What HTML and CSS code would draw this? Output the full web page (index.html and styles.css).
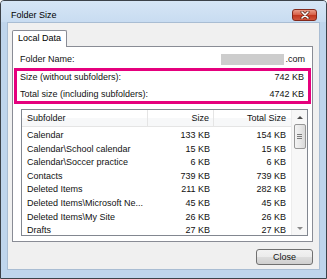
FILE: index.html
```html
<!doctype html>
<html lang="en">
<head>
  <meta charset="UTF-8">
  <meta name="viewport" content="width=device-width, initial-scale=1.0">
  <title>Folder Size</title>
  <link rel="stylesheet" href="styles.css">
</head>
<body>
  <div class="window">
    <div class="titlebar">
      <span class="title">Folder Size</span>
      <button class="close-x" aria-label="Close">
        <svg width="10" height="8" viewBox="0 0 10 8">
          <path d="M2 1 L8 7 M8 1 L2 7" stroke="#5a2418" stroke-width="3" stroke-linecap="round"/>
          <path d="M2 1 L8 7 M8 1 L2 7" stroke="#fff" stroke-width="1.6" stroke-linecap="round"/>
        </svg>
      </button>
    </div>
    <div class="client">
      <div class="tabs">
        <span class="tab">Local Data</span>
      </div>
      <div class="panel">
        <div class="info-row">
          <span>Folder Name:</span>
          <span class="mail"><span class="blur"></span>.com</span>
        </div>
        <div class="highlight">
          <div class="info-row">
            <span>Size (without subfolders):</span>
            <span>742 KB</span>
          </div>
          <div class="info-row">
            <span>Total size (including subfolders):</span>
            <span>4742 KB</span>
          </div>
        </div>
        <div class="listview">
          <div class="list-main">
            <div class="list-head">
              <span class="col name">Subfolder</span>
              <span class="col size">Size</span>
              <span class="col total">Total Size</span>
            </div>
            <div class="list-body">
              <div class="list-row"><span class="col name">Calendar</span><span class="col size">133 KB</span><span class="col total">154 KB</span></div>
              <div class="list-row"><span class="col name">Calendar\School calendar</span><span class="col size">15 KB</span><span class="col total">15 KB</span></div>
              <div class="list-row"><span class="col name">Calendar\Soccer practice</span><span class="col size">6 KB</span><span class="col total">6 KB</span></div>
              <div class="list-row"><span class="col name">Contacts</span><span class="col size">739 KB</span><span class="col total">739 KB</span></div>
              <div class="list-row"><span class="col name">Deleted Items</span><span class="col size">211 KB</span><span class="col total">282 KB</span></div>
              <div class="list-row"><span class="col name">Deleted Items\Microsoft Ne...</span><span class="col size">45 KB</span><span class="col total">45 KB</span></div>
              <div class="list-row"><span class="col name">Deleted Items\My Site</span><span class="col size">26 KB</span><span class="col total">26 KB</span></div>
              <div class="list-row"><span class="col name">Drafts</span><span class="col size">27 KB</span><span class="col total">27 KB</span></div>
            </div>
          </div>
          <div class="scrollbar">
            <span class="arrow up"></span>
            <span class="thumb"><span class="grip"></span></span>
            <span class="track"></span>
            <span class="arrow down"></span>
          </div>
        </div>
      </div>
      <div class="footer">
        <button class="btn">Close</button>
      </div>
    </div>
  </div>
</body>
</html>
```

FILE: styles.css
```css
body {
  margin: 0;
  font-family: "Liberation Sans", Arial, sans-serif;
  font-size: 9px;
  color: #111;
}
.window {
  width: 327px;
  height: 279px;
  box-sizing: border-box;
  border: 1px solid #3c4148;
  border-radius: 4px 4px 0 0;
  background: #bfd5ec;
  display: flex;
  flex-direction: column;
  overflow: hidden;
}
.titlebar {
  height: 21px;
  display: flex;
  justify-content: space-between;
  align-items: flex-start;
  background: linear-gradient(#d6e5f5, #c8dcf1);
}
.title {
  margin: 9px 0 0 10px;
  line-height: 11px;
  color: #000;
}
.close-x {
  margin: 8px 9px 0 0;
  width: 25px;
  height: 12px;
  padding: 0;
  border: 1px solid #83291b;
  border-radius: 3px;
  background: linear-gradient(#eb9c89, #d9634b 45%, #c2371f 55%, #d0553c);
  display: flex;
  align-items: center;
  justify-content: center;
}
.client {
  margin: 0 6px 0 6px;
  height: 248px;
  box-sizing: border-box;
  border: 1px solid #a9bdd3;
  background: #f0f0f0;
  padding: 7px 6px 0 4px;
}
.tabs {
  display: flex;
}
.tab {
  position: relative;
  z-index: 1;
  height: 16px;
  line-height: 15px;
  margin-bottom: -1px;
  padding: 0 5px;
  border: 1px solid #898c95;
  border-bottom: none;
  border-radius: 2px 2px 0 0;
  background: #fff;
  color: #000;
}
.panel {
  height: 196px;
  box-sizing: border-box;
  border: 1px solid #898c95;
  background: #fff;
  padding-top: 6px;
}
.info-row {
  display: flex;
  justify-content: space-between;
  line-height: 13px;
  padding: 0 7px;
}
.mail {
  display: flex;
  align-items: center;
}
.blur {
  width: 63px;
  height: 11px;
  margin-right: 1px;
  background: #cdcdcd;
  filter: blur(0.6px);
}
.highlight {
  margin: 2px 1px 0;
  border: 3px solid #e5007d;
  padding: 0;
}
.highlight .info-row {
  padding: 0 4px 0 3px;
}
.highlight .info-row + .info-row {
  margin-top: 4px;
}
.listview {
  margin: 5px 4px 0 8px;
  height: 127px;
  box-sizing: border-box;
  border: 1px solid #828790;
  display: flex;
  overflow: hidden;
}
.list-main {
  flex: 1;
  overflow: hidden;
}
.list-head {
  display: flex;
  height: 17px;
  box-sizing: border-box;
  line-height: 16px;
  border-bottom: 1px solid #e5e5e5;
  background: linear-gradient(#fff 50%, #f7f8f9 50%);
}
.list-body {
  padding-top: 2px;
}
.list-row {
  display: flex;
  line-height: 13.6px;
}
.col {
  box-sizing: border-box;
  white-space: nowrap;
  overflow: hidden;
}
.col.name {
  width: 126px;
  padding-left: 5px;
}
.col.size {
  width: 66px;
  text-align: right;
  padding-right: 4px;
}
.col.total {
  flex: 1;
  text-align: right;
  padding-right: 5px;
}
.list-head .col.name,
.list-head .col.size {
  border-right: 1px solid #e5e5e5;
}
.scrollbar {
  width: 15px;
  display: flex;
  flex-direction: column;
  align-items: center;
  background: #f7f7f7;
  border-left: 1px solid #ececec;
}
.arrow {
  height: 14px;
  width: 100%;
  display: flex;
  align-items: center;
  justify-content: center;
}
.arrow::before {
  content: "";
  border-left: 3px solid transparent;
  border-right: 3px solid transparent;
}
.arrow.up::before {
  border-bottom: 3px solid #4d4d4d;
}
.arrow.down::before {
  border-top: 3px solid #8a8a8a;
}
.thumb {
  width: 12px;
  height: 25px;
  box-sizing: border-box;
  border: 1px solid #979797;
  border-radius: 2px;
  background: linear-gradient(90deg, #f3f3f3, #e8e8e8 50%, #d9d9d9);
  display: flex;
  align-items: center;
  justify-content: center;
}
.grip {
  width: 5px;
  height: 5px;
  background: repeating-linear-gradient(#7a7a7a 0 1px, transparent 1px 2px);
}
.track {
  flex: 1;
}
.footer {
  display: flex;
  justify-content: flex-end;
  padding-top: 7px;
}
.btn {
  width: 57px;
  height: 16px;
  padding: 0;
  border: 1px solid #707070;
  border-radius: 3px;
  background: linear-gradient(#f2f2f2, #ebebeb 50%, #dddddd 50%, #cfcfcf);
  font-family: "Liberation Sans", Arial, sans-serif;
  font-size: 9px;
  color: #111;
}
```
